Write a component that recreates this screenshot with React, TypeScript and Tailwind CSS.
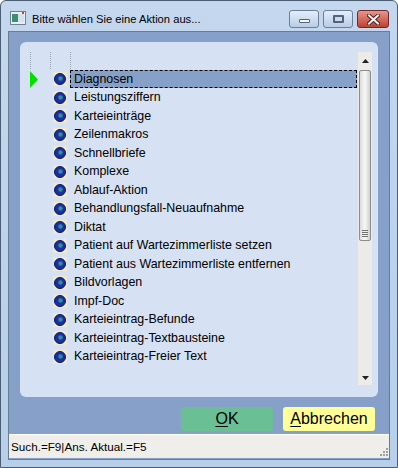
import React from "react";

const items = [
  "Diagnosen",
  "Leistungsziffern",
  "Karteieinträge",
  "Zeilenmakros",
  "Schnellbriefe",
  "Komplexe",
  "Ablauf-Aktion",
  "Behandlungsfall-Neuaufnahme",
  "Diktat",
  "Patient auf Wartezimmerliste setzen",
  "Patient aus Wartezimmerliste entfernen",
  "Bildvorlagen",
  "Impf-Doc",
  "Karteieintrag-Befunde",
  "Karteieintrag-Textbausteine",
  "Karteieintrag-Freier Text",
];

function Bullet() {
  return (
    <svg width="14" height="14" viewBox="0 0 14 14" aria-hidden>
      <rect x="0" y="0" width="14" height="14" fill="#efe9cf" />
      <circle cx="7" cy="7" r="5.5" fill="#1c2f9e" stroke="#0b1566" strokeWidth="1" />
      <circle cx="7.5" cy="6.5" r="2.2" fill="#2f8f9c" />
    </svg>
  );
}

function AppIcon() {
  return (
    <svg width="16" height="14" viewBox="0 0 16 14" aria-hidden>
      <rect x="0.5" y="0.5" width="15" height="13" fill="#e8eef4" stroke="#6f8194" />
      <rect x="2" y="3" width="6" height="8" fill="#3f8f6f" />
      <rect x="8" y="3" width="6" height="8" fill="#d6e2ee" />
      <rect x="12" y="1" width="2" height="2" fill="#c04040" />
    </svg>
  );
}

export default function App() {
  return (
    <div
      className="flex h-[468px] w-[398px] flex-col overflow-hidden rounded-t-[6px] border border-[#4a5d72] bg-gradient-to-b from-[#c4d7ee] to-[#b7cfe9]"
      style={{ fontFamily: '"Liberation Sans", Arial, sans-serif' }}
    >
      {/* title bar */}
      <div className="flex h-[30px] shrink-0 items-start">
        <div className="ml-[9px] mt-[10px]">
          <AppIcon />
        </div>
        <span className="ml-[6px] mt-[10px] text-[11.2px] leading-[16px] text-black">
          Bitte wählen Sie eine Aktion aus...
        </span>
        <div className="ml-auto mr-[8px] mt-[9px] flex gap-[4px]">
          <div className="flex h-[18px] w-[30px] items-center justify-center rounded-[3px] border border-[#6c7f98] bg-gradient-to-b from-[#e4eefa] to-[#b8cce6]">
            <div className="mt-[4px] h-[4px] w-[11px] rounded-[1px] border border-[#52627a] bg-[#f4f6fa]" />
          </div>
          <div className="flex h-[18px] w-[30px] items-center justify-center rounded-[3px] border border-[#6c7f98] bg-gradient-to-b from-[#e4eefa] to-[#b8cce6]">
            <div className="h-[8px] w-[11px] rounded-[1px] border-[2px] border-[#52627a] bg-[#cfd9ea]" />
          </div>
          <div className="flex h-[18px] w-[32px] items-center justify-center rounded-[3px] border border-[#6e2a2a] bg-gradient-to-b from-[#e8948a] to-[#c0402f]">
            <svg width="13" height="11" viewBox="0 0 13 11" aria-hidden>
              <path d="M2 1.5 L11 9.5 M11 1.5 L2 9.5" stroke="#4a2323" strokeWidth="4" strokeLinecap="square" />
              <path d="M2 1.5 L11 9.5 M11 1.5 L2 9.5" stroke="#f2f2f2" strokeWidth="2" strokeLinecap="square" />
            </svg>
          </div>
        </div>
      </div>

      {/* client area */}
      <div className="mx-[7px] flex flex-1 flex-col border border-[#6a7c92] bg-[#87a0c9]">
        <div className="mx-[11px] mt-[10px] flex h-[355px] rounded-[6px] bg-[#d6e1f3] pb-[12px] pl-[10px] pr-[6px] pt-[10px]">
          {/* tree */}
          <div className="flex flex-1 flex-col">
            <div className="flex h-[18px] items-start">
              <div className="h-[17px] border-l border-dotted border-[#9aa6b8]" />
              <div className="ml-[19px] h-[17px] border-l border-dotted border-[#9aa6b8]" />
              <div className="ml-[19px] h-[17px] border-l border-dotted border-[#9aa6b8]" />
            </div>
            {items.map((label, i) => (
              <div key={label} className="flex h-[18.5px] items-center">
                <div className="flex w-[23px] items-center">
                  {i === 0 && (
                    <svg width="8" height="17" viewBox="0 0 8 17" aria-hidden>
                      <path d="M0 0 L8 8.5 L0 17 Z" fill="#00e000" />
                    </svg>
                  )}
                </div>
                <Bullet />
                <div
                  className={
                    i === 0
                      ? "ml-[3px] flex h-[18px] flex-1 items-center border border-dashed border-black bg-[#86a0c8] pl-[3px] text-[12.4px] text-black"
                      : "ml-[4px] pl-[3px] text-[12.4px] text-black"
                  }
                >
                  {label}
                </div>
              </div>
            ))}
          </div>

          {/* scrollbar */}
          <div className="ml-[1px] flex w-[14px] flex-col bg-[#ecebe7]">
            <div className="flex h-[18px] items-center justify-center">
              <svg width="7" height="4" viewBox="0 0 7 4" aria-hidden>
                <path d="M3.5 0 L7 4 L0 4 Z" fill="#202020" />
              </svg>
            </div>
            <div className="mx-[1px] flex h-[171px] flex-col items-center justify-end rounded-[2px] border border-[#8c8c8c] bg-gradient-to-r from-[#dcdcdc] via-[#f8f8f8] to-[#cfcfcf] pb-[3px]">
              <div className="flex flex-col gap-[1px]">
                <div className="h-px w-[6px] bg-[#707070]" />
                <div className="h-px w-[6px] bg-[#707070]" />
                <div className="h-px w-[6px] bg-[#707070]" />
                <div className="h-px w-[6px] bg-[#707070]" />
              </div>
            </div>
            <div className="flex-1" />
            <div className="flex h-[14px] items-center justify-center">
              <svg width="7" height="4" viewBox="0 0 7 4" aria-hidden>
                <path d="M0 0 L7 0 L3.5 4 Z" fill="#202020" />
              </svg>
            </div>
          </div>
        </div>

        {/* buttons */}
        <div className="mr-[14px] mt-[10px] flex justify-end gap-[10px]">
          <button
            type="button"
            className="flex h-[24px] w-[92px] items-center justify-center rounded-[3px] bg-[#6bbf95] text-[16px] text-black"
          >
            <span className="underline decoration-1 underline-offset-2">O</span>K
          </button>
          <button
            type="button"
            className="flex h-[24px] w-[92px] items-center justify-center rounded-[3px] bg-[#ffff99] text-[16px] text-black"
          >
            <span className="underline decoration-1 underline-offset-2">A</span>bbrechen
          </button>
        </div>

        {/* status bar */}
        <div className="mt-[3px] flex h-[24px] items-center border-t border-[#ffffff] bg-[#efeeea] pl-[2px] text-black">
          <span className="text-[11.7px]">Such.=F9|Ans. Aktual.=F5</span>
          <div className="ml-auto mr-[1px] mt-[10px] grid grid-cols-3 gap-[1px]">
            <div />
            <div />
            <div className="h-[2px] w-[2px] bg-[#a0a0a0]" />
            <div />
            <div className="h-[2px] w-[2px] bg-[#a0a0a0]" />
            <div className="h-[2px] w-[2px] bg-[#a0a0a0]" />
            <div className="h-[2px] w-[2px] bg-[#a0a0a0]" />
            <div className="h-[2px] w-[2px] bg-[#a0a0a0]" />
            <div className="h-[2px] w-[2px] bg-[#a0a0a0]" />
          </div>
        </div>
      </div>
      <div className="h-[7px] shrink-0" />
    </div>
  );
}
